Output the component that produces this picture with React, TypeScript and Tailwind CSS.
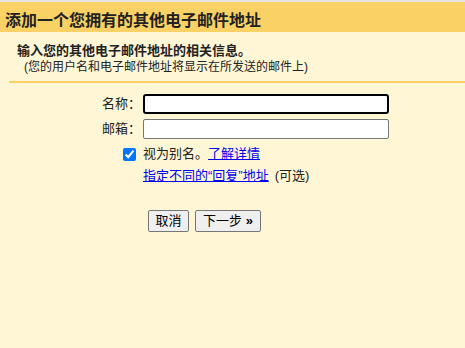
export default function App() {
    return (
        <div
            className="min-h-[348px] w-full bg-[#fff6d6] text-[#222]"
            style={{ fontFamily: '"Liberation Sans", "Noto Sans CJK SC", sans-serif' }}
        >
            <div className="h-[2px] bg-[#e3e3e3]" />
            <div className="h-[30px] bg-[#fad165] pl-[5px] pt-[7px] text-[16px] leading-[24px] font-bold">
                添加一个您拥有的其他电子邮件地址
            </div>

            <div className="pl-[17px] pt-[11px] text-[13px] leading-[16px] font-bold">
                输入您的其他电子邮件地址的相关信息。
            </div>
            <div className="pl-[24px] text-[12px] leading-[16px]">
                (您的用户名和电子邮件地址将显示在所发送的邮件上)
            </div>
            <div className="ml-[9px] mt-[6px] h-[2px] bg-[#fad165]" />

            <div className="mt-[11px] grid grid-cols-[143px_246px] gap-y-[5px] items-center text-[13px]">
                <label className="text-right pr-[2px] leading-[20px]">名称：</label>
                <input
                    type="text"
                    className="h-[20px] w-[246px] bg-white border-2 border-black rounded-[3px] outline-none px-[2px]"
                />
                <label className="text-right pr-[2px] leading-[20px]">邮箱：</label>
                <input
                    type="text"
                    className="h-[20px] w-[246px] bg-white border border-[#767676] rounded-[2px] outline-none px-[2px]"
                />
            </div>

            <div className="mt-[6px] pl-[123px] flex items-center h-[18px] text-[13px]">
                <input
                    type="checkbox"
                    checked
                    readOnly
                    className="m-0 w-[13px] h-[13px] accent-[#0075ff]"
                />
                <span className="ml-[7px]">
                    视为别名。
                    <a href="#" className="text-[#0000ee] underline">了解详情</a>
                </span>
            </div>

            <div className="mt-[4px] pl-[143px] h-[18px] leading-[18px] text-[13px]">
                <a href="#" className="text-[#0000ee] underline">指定不同的“回复”地址</a>
                <span className="ml-[6px]">(可选)</span>
            </div>

            <div className="mt-[25px] pl-[148px] flex gap-[6px] text-[13px]">
                <button className="h-[22px] w-[41px] bg-[#efefef] border border-[#767676] rounded-[2px] text-black">
                    取消
                </button>
                <button className="h-[22px] w-[66px] bg-[#efefef] border border-[#767676] rounded-[2px] text-black">
                    下一步 <b>»</b>
                </button>
            </div>
        </div>
    );
}
